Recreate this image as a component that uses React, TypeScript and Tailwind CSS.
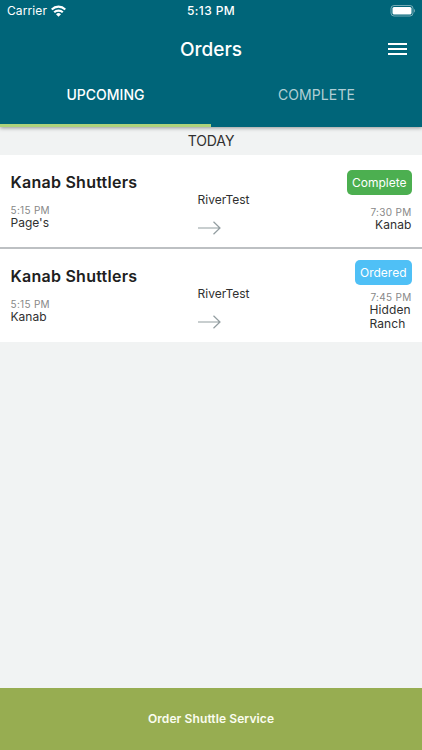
import clsx from 'clsx'

type Order = {
    company: string
    pickupTime: string
    pickup: string
    route: string
    dropoffTime: string
    dropoff: string
    status: 'Complete' | 'Ordered'
}

const orders: Order[] = [
    { company: 'Kanab Shuttlers', pickupTime: '5:15 PM', pickup: "Page's", route: 'RiverTest', dropoffTime: '7:30 PM', dropoff: 'Kanab', status: 'Complete' },
    { company: 'Kanab Shuttlers', pickupTime: '5:15 PM', pickup: 'Kanab', route: 'RiverTest', dropoffTime: '7:45 PM', dropoff: 'Hidden Ranch', status: 'Ordered' },
]

function StatusBar() {
    return <div className="flex h-[22px] items-center px-[7px] text-[12px] leading-[22px]">
        <div className="flex flex-1 items-center gap-[4px]">
            <span className="tracking-[0.1px]">Carrier</span>
            <svg width="15" height="12" viewBox="0 0 15 12" fill="none" stroke="white" strokeWidth="2.2">
                <path d="M0.7 4.5a9.6 9.6 0 0 1 13.6 0" />
                <path d="M3.2 7.3a6.1 6.1 0 0 1 8.6 0" />
                <path d="M7.5 11.8 5 9.3a3.6 3.6 0 0 1 5 0z" fill="white" stroke="none" />
            </svg>
        </div>
        <span className="font-medium tracking-[0.4px]">5:13 PM</span>
        <div className="flex flex-1 justify-end">
            <svg width="25" height="12" viewBox="0 0 25 12">
                <rect x="1" y="0.5" width="22" height="10.5" rx="3" fill="none" stroke="white" strokeOpacity="0.45" />
                <rect x="2.500" y="2" width="19" height="7.5" rx="1.5" fill="white" />
                <path d="M24 4v3.6c1.2-.5 1.2-3.1 0-3.6" fill="white" fillOpacity="0.5" />
            </svg>
        </div>
    </div>
}

function Header() {
    return <header className="relative h-[127px] bg-[#006579] text-white shadow-[0_1px_4px_rgba(0,0,0,0.4)]">
        <StatusBar />
        <div className="flex h-[54px] items-center px-[15px]">
            <div className="w-[19px]" />
            <h1 className="flex-1 pt-[2px] text-center text-[19px] font-medium">Orders</h1>
            <button className="flex w-[19px] flex-col gap-[3px]" aria-label="Menu">
                <span className="h-[2px] w-full bg-white" />
                <span className="h-[2px] w-full bg-white" />
                <span className="h-[2px] w-full bg-white" />
            </button>
        </div>
        <nav className="flex h-[51px] text-[14px] leading-[38px]">
            <button className="flex-1 border-b-3 border-[#aed27b] pb-[10px] font-medium">UPCOMING</button>
            <button className="flex-1 border-b-3 border-transparent pb-[10px] tracking-[0.1px] text-white/70">COMPLETE</button>
        </nav>
    </header>
}

function OrderRow({ order, last }: { order: Order, last: boolean }) {
    return <li className={clsx('flex bg-white px-[10.5px]', last ? 'h-[92.5px]' : 'h-[94px] border-b-2 border-[#bdc0c3]')}>
        <div className="w-[187px] pt-[16px]">
            <h2 className="text-[16px] font-semibold leading-[22px] tracking-[0.25px] text-[#202020]">{order.company}</h2>
            <p className="mt-[11px] text-[10px] leading-[12px] tracking-[0.3px] text-[#888]">{order.pickupTime}</p>
            <p className="text-[12px] leading-[14px]">{order.pickup}</p>
        </div>
        <div className="flex-1 pt-[37px]">
            <p className="text-[12px] leading-[16px]">{order.route}</p>
            <svg className="mt-[13px]" width="23" height="14" viewBox="0 0 23 14" fill="none" stroke="#929da0" strokeWidth="1.2">
                <path d="M0 7h22M15.5 0.7 22 7l-6.5 6.300" />
            </svg>
        </div>
        <div className={clsx('flex flex-col items-end', last ? 'pt-[11px]' : 'pt-[15px]')}>
            <span className={clsx(
                'flex h-[25px] items-center rounded-[5px] px-[5px] text-[12px] text-white',
                order.status === 'Complete' ? 'bg-[#4caf50]' : 'bg-[#4fc0f6]',
            )}>
                {order.status}
            </span>
            <p className={clsx('text-[10px] leading-[12px] tracking-[0.3px] text-[#888]', last ? 'mt-[6px]' : 'mt-[11px]')}>{order.dropoffTime}</p>
            <p className={clsx('text-[12px] leading-[14px] tracking-[0.1px]', last && 'w-[42px]')}>{order.dropoff}</p>
        </div>
    </li>
}

export default function App() {
    return <div className="flex h-screen w-full flex-col bg-[#f1f3f3] font-['Inter',sans-serif] text-[#303030]">
        <Header />
        <main className="flex-1">
            <h3 className="h-[28px] text-center text-[14px] leading-[28px] tracking-[-0.1px]">TODAY</h3>
            <ul>
                {orders.map((order, i) => <OrderRow key={i} order={order} last={i === orders.length - 1} />)}
            </ul>
        </main>
        <button className="h-[62px] bg-[#97ad51] text-[12px] font-semibold tracking-[0.1px] text-[#fbfdf0]">
            Order Shuttle Service
        </button>
    </div>
}
